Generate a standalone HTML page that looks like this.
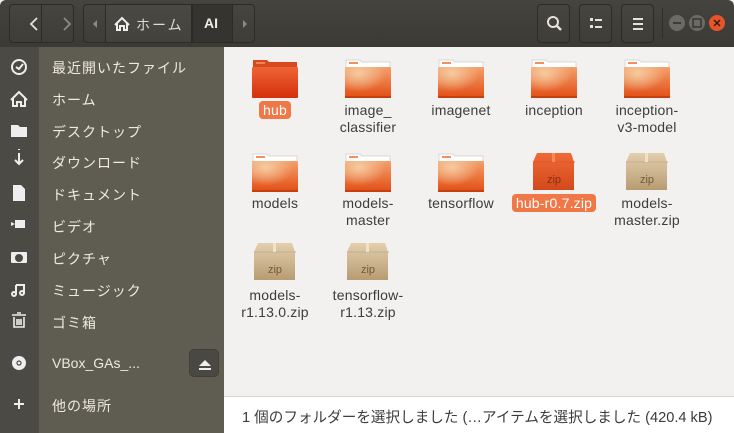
<!DOCTYPE html>
<html><head><meta charset="utf-8"><style>
*{margin:0;padding:0;box-sizing:border-box}
body{width:734px;height:433px;overflow:hidden;font-family:"Liberation Sans","Noto Sans CJK JP",sans-serif;background:#f2f1f0;position:relative}
#hdr{position:absolute;left:0;top:0;width:734px;height:47px;background:linear-gradient(#45443f,#3b3a35);border-radius:6px 6px 0 0}
.btn{position:absolute;top:4px;height:39px;border:1px solid #2c2b28;border-radius:4px;background:linear-gradient(#46453f,#3e3d38);color:#dfdbd2}
#side{position:absolute;left:0;top:47px;width:224px;height:386px;background:#5f5c51}
#icol{position:absolute;left:0;top:47px;width:39px;height:386px;background:#4b4a44}
.si{position:absolute;left:52px;color:#eeeae2;font-size:14px;letter-spacing:1px}
#content{position:absolute;left:224px;top:47px;width:510px;height:350px;background:#f2f1f0}
.it{position:absolute;width:92px;text-align:center;font-size:14px;color:#3c3c3c;line-height:17px;letter-spacing:0.2px}
.sel{background:#f07746;color:#fff;border-radius:4px;padding:1px 4px}
#status{position:absolute;left:224px;top:396px;width:510px;height:37px;background:#fff;border-top:1px solid #d8d6d2;font-size:14.6px;color:#3c3c3c;padding:9px 0 0 18px;white-space:nowrap}
</style></head><body>
<div id="hdr">
 <div class="btn" style="left:9px;width:65px"><div style="position:absolute;left:31px;top:0;width:1px;height:37px;background:#2c2b28"></div>
  <svg width="65" height="37" style="position:absolute;left:0;top:0"><path d="M27 13l-6 6 6 6" stroke="#e6e2d8" stroke-width="1.8" fill="none"/><path d="M55 13l6 6-6 6" stroke="#8d8a82" stroke-width="1.8" fill="none" transform="translate(-1,0)"/></svg></div>
 <div class="btn" style="left:83px;width:172px">
  <div style="position:absolute;left:21px;top:-1px;width:87px;height:39px;border:1px solid #2c2b28;background:linear-gradient(#4a4943,#43423c)"></div>
  <div style="position:absolute;left:108px;top:-1px;width:41px;height:39px;background:#353430;border:1px solid #2c2b28"></div>
  <svg width="172" height="37" style="position:absolute;left:0;top:0"><path d="M9 19l4-4v8z" fill="#8d8a82"/><path d="M159 15l4 4-4 4z" fill="#8d8a82"/>
  <path d="M31 20l7-7 7 7M33 18v7h3v-4h4v4h3v-7" stroke="#eee" stroke-width="2" fill="none"/></svg>
  <span style="position:absolute;left:52px;top:10px;font-size:14px;letter-spacing:2px">ホーム</span>
  <span style="position:absolute;left:120px;top:10px;font-size:14px;font-weight:bold;color:#f0ede6">AI</span>
 </div>
 <div class="btn" style="left:537px;width:33px"><svg width="33" height="37"><circle cx="15" cy="17" r="5" stroke="#e6e2d8" stroke-width="2" fill="none"/><path d="M19 21l4 4" stroke="#e6e2d8" stroke-width="2.5"/></svg></div>
 <div class="btn" style="left:579px;width:33px"><svg width="33" height="37"><rect x="10" y="13" width="3" height="3" fill="#e6e2d8"/><rect x="10" y="20" width="3" height="3" fill="#e6e2d8"/><rect x="15" y="14" width="7" height="2" fill="#e6e2d8"/><rect x="15" y="21" width="7" height="2" fill="#e6e2d8"/></svg></div>
 <div class="btn" style="left:621px;width:33px"><svg width="33" height="37"><rect x="11" y="13" width="10" height="2" fill="#e6e2d8"/><rect x="11" y="18" width="10" height="2" fill="#e6e2d8"/><rect x="11" y="23" width="10" height="2" fill="#e6e2d8"/></svg></div>
 <div style="position:absolute;left:662px;top:8px;width:1px;height:30px;background:#2f2e2a"></div>
 <svg width="70" height="30" style="position:absolute;left:664px;top:8px"><circle cx="13" cy="15" r="8" fill="#6b6a64"/><path d="M9 15h8" stroke="#2f2e2a" stroke-width="1.5"/><circle cx="33" cy="15" r="8" fill="#6b6a64"/><rect x="29" y="11" width="8" height="8" stroke="#2f2e2a" stroke-width="1.3" fill="none"/><circle cx="53" cy="15" r="8" fill="#e8542a"/><path d="M50 12l6 6M56 12l-6 6" stroke="#3a1a10" stroke-width="1.5"/></svg>
</div>
<div id="side"></div><div id="icol"></div>
<svg style="position:absolute;left:0;top:47px" width="39" height="386" fill="none" stroke="#eee" stroke-width="2">
 <circle cx="19" cy="20" r="7"/><path d="M16 20l3 2 4-5"/>
 <path d="M11 53l8-8 8 8M13 51v8h4v-4h4v4h4v-8"/>
 <path d="M11 78h7l2 2h7v10h-16z" fill="#eee" stroke="none"/>
 <path d="M19 106v10M15 113l4 4 4-4M19 102v1" />
 <path d="M13 138h8l4 4v12h-12z" fill="#eee" stroke="none"/>
 <rect x="15" y="173" width="10" height="8" fill="#eee" stroke="none"/><path d="M11 175l4 2-4 2z" fill="#eee" stroke="none"/>
 <rect x="11" y="205" width="16" height="11" rx="1" fill="#eee" stroke="none"/><circle cx="19" cy="211" r="3" fill="#4b4a44" stroke="#4b4a44"/>
 <path d="M16 238v9M24 237v9M16 238h8" stroke-width="2"/><circle cx="14" cy="247" r="2"/><circle cx="22" cy="246" r="2"/>
 <path d="M12 268h14M14 270v10h10v-10M17 266h4M17 272v6M19 272v6M21 272v6" stroke-width="1.6"/>
 <circle cx="19" cy="316" r="7" fill="#eee" stroke="none"/><circle cx="19" cy="316" r="2" stroke="#4b4a44" stroke-width="1.2"/>
 <path d="M19 352v10M14 357h10"/>
</svg>
<div class="si" style="top:58px">最近開いたファイル</div>
<div class="si" style="top:90px">ホーム</div>
<div class="si" style="top:122px">デスクトップ</div>
<div class="si" style="top:153px">ダウンロード</div>
<div class="si" style="top:185px">ドキュメント</div>
<div class="si" style="top:217px">ビデオ</div>
<div class="si" style="top:249px">ピクチャ</div>
<div class="si" style="top:281px">ミュージック</div>
<div class="si" style="top:313px">ゴミ箱</div>
<div class="si" style="top:355px;letter-spacing:0">VBox_GAs_...</div>
<div style="position:absolute;left:189px;top:349px;width:30px;height:28px;border-radius:5px;background:#4a4843;border:1px solid #3f3e39"><svg width="30" height="28"><path d="M9 16l6-6 6 6z" fill="#eee"/><rect x="9" y="18" width="12" height="2" fill="#eee"/></svg></div>
<div class="si" style="top:396px">他の場所</div>
<div id="content"></div>
<svg width="0" height="0" style="position:absolute"><defs>
<linearGradient id="fo" x1="0" y1="0" x2="0" y2="1"><stop offset="0" stop-color="#f3a06b"/><stop offset="1" stop-color="#e24d14"/></linearGradient>
<radialGradient id="fl" cx="0.3" cy="0.2" r="0.6"><stop offset="0" stop-color="#f6caa0"/><stop offset="1" stop-color="#f6caa0" stop-opacity="0"/></radialGradient>
<linearGradient id="fr" x1="0" y1="0" x2="0" y2="1"><stop offset="0" stop-color="#ef6435"/><stop offset="1" stop-color="#d42f0c"/></linearGradient>
<linearGradient id="zb" x1="0" y1="0" x2="0" y2="1"><stop offset="0" stop-color="#e3cfae"/><stop offset="1" stop-color="#b79c72"/></linearGradient>
<linearGradient id="zo" x1="0" y1="0" x2="0" y2="1"><stop offset="0" stop-color="#f06a36"/><stop offset="1" stop-color="#d2491c"/></linearGradient>
<g id="folder"><path d="M1 2h14l2 2h28v10h-44z" fill="#fff" stroke="#d0ccc6" stroke-width="0.7"/><rect x="4" y="4" width="9" height="2" fill="#f0905c"/><rect x="0" y="9" width="46" height="31" rx="1" fill="url(#fo)"/><rect x="0" y="9" width="46" height="31" fill="url(#fl)"/><rect x="0" y="38" width="46" height="2" fill="#c4410f"/></g>
<g id="zip"><path d="M4 0h34l3 9v28h-41v-28z" fill="url(#zb)"/><path d="M0 9h42" stroke="#c7b18b"/><rect x="19" y="0" width="3" height="9" fill="#efe2ca"/><text x="21" y="30" font-size="11" text-anchor="middle" fill="#6d5a3e" font-family="Liberation Sans">zip</text></g>
</defs></svg>
<svg style="position:absolute;left:252px;top:58px" width="46" height="40"><path d="M1 2h14l2 2h28v10h-44z" fill="#d64a1e"/><rect x="4" y="4" width="9" height="2" fill="#f2805a"/><rect x="0" y="9" width="46" height="31" rx="1" fill="url(#fr)"/></svg>
<svg style="position:absolute;left:345px;top:58px" width="46" height="40"><use href="#folder"/></svg>
<svg style="position:absolute;left:438px;top:58px" width="46" height="40"><use href="#folder"/></svg>
<svg style="position:absolute;left:531px;top:58px" width="46" height="40"><use href="#folder"/></svg>
<svg style="position:absolute;left:624px;top:58px" width="46" height="40"><use href="#folder"/></svg>
<svg style="position:absolute;left:252px;top:152px" width="46" height="40"><use href="#folder"/></svg>
<svg style="position:absolute;left:345px;top:152px" width="46" height="40"><use href="#folder"/></svg>
<svg style="position:absolute;left:438px;top:152px" width="46" height="40"><use href="#folder"/></svg>
<svg style="position:absolute;left:533px;top:153px" width="42" height="38"><path d="M4 0h34l3 9v28h-41v-28z" fill="url(#zo)"/><path d="M0 9h42" stroke="#e0592a"/><rect x="19" y="0" width="3" height="9" fill="#f58a5c"/><text x="21" y="30" font-size="11" text-anchor="middle" fill="#8a2e10" font-family="Liberation Sans">zip</text></svg>
<svg style="position:absolute;left:626px;top:153px" width="42" height="38"><use href="#zip"/></svg>
<svg style="position:absolute;left:254px;top:243px" width="42" height="38"><use href="#zip"/></svg>
<svg style="position:absolute;left:347px;top:243px" width="42" height="38"><use href="#zip"/></svg>
<div class="it" style="left:229px;top:102px"><span class="sel">hub</span></div>
<div class="it" style="left:322px;top:102px">image_<br>classifier</div>
<div class="it" style="left:415px;top:102px">imagenet</div>
<div class="it" style="left:508px;top:102px">inception</div>
<div class="it" style="left:601px;top:102px">inception-<br>v3-model</div>
<div class="it" style="left:229px;top:195px">models</div>
<div class="it" style="left:322px;top:195px">models-<br>master</div>
<div class="it" style="left:415px;top:195px">tensorflow</div>
<div class="it" style="left:504px;top:195px;width:100px"><span class="sel">hub-r0.7.zip</span></div>
<div class="it" style="left:601px;top:195px">models-<br>master.zip</div>
<div class="it" style="left:229px;top:287px">models-<br>r1.13.0.zip</div>
<div class="it" style="left:322px;top:287px">tensorflow-<br>r1.13.zip</div>
<div id="status">1 個のフォルダーを選択しました (…アイテムを選択しました (420.4 kB)</div>
</body></html>
